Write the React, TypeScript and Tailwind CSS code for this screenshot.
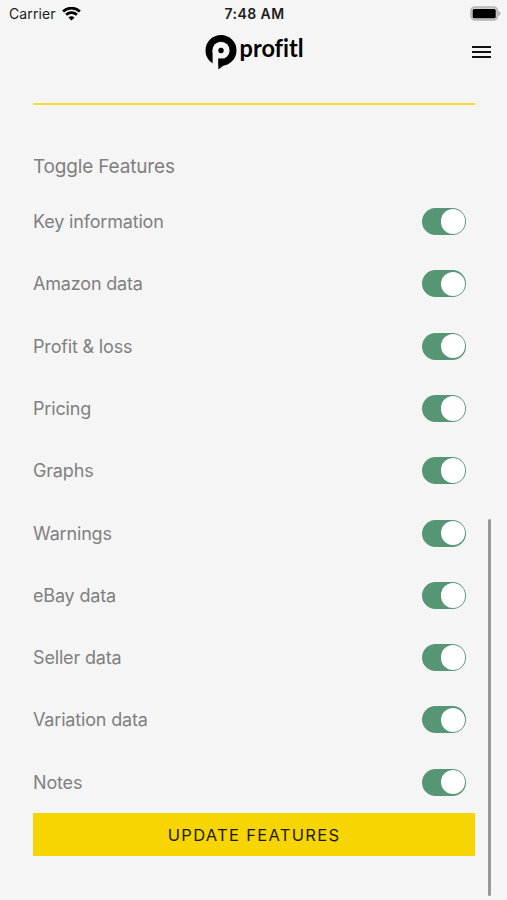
import React, { useState } from 'react';

const FEATURES = [
  'Key information',
  'Amazon data',
  'Profit & loss',
  'Pricing',
  'Graphs',
  'Warnings',
  'eBay data',
  'Seller data',
  'Variation data',
  'Notes',
];

const WifiIcon: React.FC = () => (
  <svg width="19" height="14" viewBox="0 0 19 14" fill="none" stroke="#000" strokeWidth="2.7">
    <path d="M1.1 4.4C5.8 0 13.2 0 17.9 4.4" />
    <path d="M4.1 7.8C7.2 5 11.8 5 14.9 7.8" />
    <path d="M9.5 13.4L6.5 10.4C8.2 8.9 10.8 8.9 12.5 10.4Z" fill="#000" stroke="none" />
  </svg>
);

const BatteryIcon: React.FC = () => (
  <svg width="32" height="16" viewBox="0 0 32 16">
    <rect x="1" y="1" width="26.5" height="13" rx="4" fill="#d0d0d0" stroke="#b4b4b4" strokeWidth="1.6" />
    <rect x="2.7" y="2.9" width="23" height="9.4" rx="1.5" fill="#000" />
    <path d="M28.2 5C31.4 6 31.4 9 28.2 10Z" fill="#b4b4b4" />
  </svg>
);

const Logo: React.FC = () => (
  <svg width="102" height="38" viewBox="0 0 102 38" className="overflow-visible">
    <circle cx="16" cy="16.4" r="15.5" fill="#000" />
    <circle cx="16" cy="16.4" r="8.6" fill="#f5f5f5" />
    <path d="M7.6 16.4H13.4V38H7.6Z" fill="#f5f5f5" />
    <path d="M13.4 24.4L18.5 24.6V31.5L13.4 35.4Z" fill="#000" />
    <circle cx="16" cy="16.5" r="2.7" fill="#000" />
    <text
      x="34.6"
      y="22.7"
      textLength="64"
      lengthAdjust="spacingAndGlyphs"
      className="font-['Lato',sans-serif] text-[25.5px] font-bold [font-variant-ligatures:none]"
    >
      profitl
    </text>
  </svg>
);

interface ToggleProps {
  label: string;
  checked: boolean;
  onChange: () => void;
}

const Toggle: React.FC<ToggleProps> = ({ label, checked, onChange }) => (
  <button
    role="switch"
    aria-checked={checked}
    aria-label={label}
    onClick={onChange}
    className={`flex h-[27px] w-11 items-center rounded-full px-px ${checked ? 'justify-end bg-[#579675]' : 'justify-start bg-gray-300'}`}
  >
    <span className="size-[24.5px] rounded-full bg-white" />
  </button>
);

const App: React.FC = () => {
  const [enabled, setEnabled] = useState<boolean[]>(FEATURES.map(() => true));

  const toggle = (index: number) => {
    setEnabled(enabled.map((value, i) => (i === index ? !value : value)));
  };

  return (
    <div className="relative h-[900px] w-full overflow-hidden bg-[#f5f5f5] font-['Inter',sans-serif]">
      <div className="grid h-7 grid-cols-3 items-center pl-[9px] pr-[5px] text-[14px] text-[#1c1c1c]">
        <div className="-mt-px flex items-center gap-[6px]">
          <span className="tracking-[0.1px]">Carrier</span>
          <WifiIcon />
        </div>
        <span className="-mt-px pr-[2px] text-center font-semibold tracking-[0.45px]">7:48 AM</span>
        <div className="-mt-px flex justify-end">
          <BatteryIcon />
        </div>
      </div>

      <header className="flex h-[75px] items-start justify-between pl-[205px] pr-[16px] pt-[6px]">
        <Logo />
        <button aria-label="Menu" className="mt-[12px] flex w-[19px] flex-col gap-[3px]">
          <span className="h-[2px] bg-[#111]" />
          <span className="h-[2px] bg-[#111]" />
          <span className="h-[2px] bg-[#111]" />
        </button>
      </header>

      <main className="ml-[33px] w-[442px] text-[#808080]">
        <div className="h-[2px] bg-[#fbd92e]" />
        <h2 className="mt-[48px] text-[19px] leading-[28px] tracking-[-0.17px]">Toggle Features</h2>
        <ul className="mt-[9.4px]">
          {FEATURES.map((label, i) => (
            <li key={label} className="flex h-[62.3px] items-center justify-between pr-[9px]">
              <span className="text-[18px] tracking-[-0.17px]">{label}</span>
              <Toggle label={label} checked={enabled[i]} onChange={() => toggle(i)} />
            </li>
          ))}
        </ul>
        <button className="flex h-[43px] w-full items-center justify-center bg-[#f7d500] pt-px text-[16.5px] tracking-[1.3px] text-[#1c1a05]">
          UPDATE FEATURES
        </button>
      </main>

      {/* scroll indicator */}
      <div className="absolute right-[16px] top-[519px] h-[377px] w-[3px] rounded-full bg-[#979797]" />
    </div>
  );
};

export default App;
